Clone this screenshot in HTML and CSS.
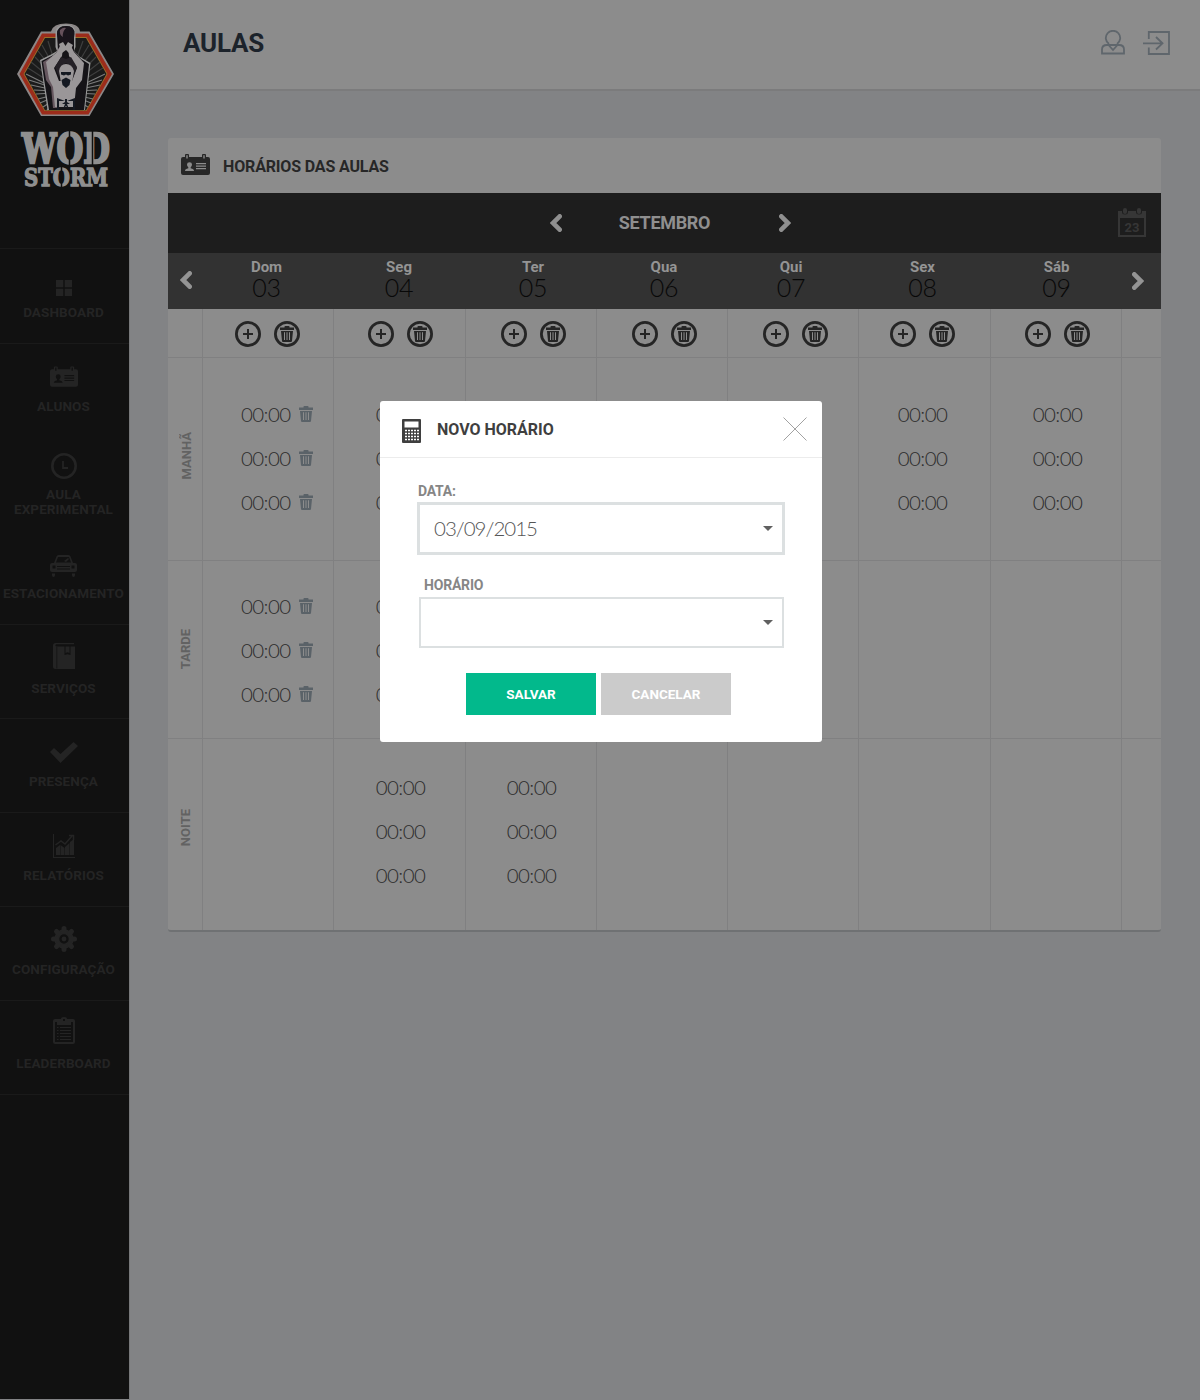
FILE: index.html
```html
<!DOCTYPE html>
<html lang="pt-BR">
<head>
<meta charset="utf-8">
<title>Aulas</title>
<link rel="stylesheet" href="styles.css">
</head>
<body>
<svg class="defs" width="0" height="0" aria-hidden="true">
  <symbol id="bin" viewBox="0 0 14 16"><path fill="currentColor" fill-rule="evenodd" d="M0 1.5h4.500V.8q0-.8.8-.8h3.400q.8 0 .8.8v.7H14V4H0zM1 5h12l-1 10q-.1 1-1 1H3q-.9 0-1-1zM4 6.300V14h1V6.300zM6.500 6.300V14h1V6.300zM9 6.300V14h1V6.300z"/></symbol>
  <symbol id="add" viewBox="0 0 26 26"><circle cx="13" cy="13" r="11.600" fill="none" stroke="currentColor" stroke-width="2.800"/><path d="M13 8v10M8 13h10" stroke="currentColor" stroke-width="2"/></symbol>
  <symbol id="del" viewBox="0 0 26 26"><circle cx="13" cy="13" r="11.600" fill="none" stroke="currentColor" stroke-width="2.800"/><use href="#bin" x="6" y="5" width="14" height="16"/></symbol>
  <symbol id="left" viewBox="0 0 12 18"><path d="M9.700 2.300L3 9l6.700 6.700" fill="none" stroke="currentColor" stroke-width="4.600" stroke-linecap="round"/></symbol>
  <symbol id="right" viewBox="0 0 12 18"><path d="M2.300 2.300L9 9l-6.700 6.700" fill="none" stroke="currentColor" stroke-width="4.600" stroke-linecap="round"/></symbol>
  <symbol id="card" viewBox="0 0 29 22"><path fill="currentColor" fill-rule="evenodd" d="M2 3h2V1q0-1 1-1h2q1 0 1 1v2h13V1q0-1 1-1h2q1 0 1 1v2h2q2 0 2 2v14q0 2-2 2H2q-2 0-2-2V5q0-2 2-2zM5.300 1.200V4.500h1.400V1.200zM22.300 1.200V4.500h1.400V1.200zM15 9v1.200h10V9zM15 11.500v1.200h10v-1.200zM15 14v1.200h10V14zM4 17h9q0-2-3.300-2.700v-1q1.300-1 1.300-2.700 0-2.400-2.500-2.400T6 10.600q0 1.700 1.300 2.700v1Q4 15 4 17z"/></symbol>
</svg>
<div class="app">
  <aside class="sidebar">
    <svg class="logo" viewBox="0 0 129 200" width="129" height="200">
      <path fill="#8c8787" d="M41 31.500h10q2-8 15-8t14 8h9.500L114 74l-24.500 42H41L17 74z"/>
      <path fill="#9c2c1b" d="M42 33.500h46.500L112 74l-23.500 40.500h-46.500L19.500 74z"/>
      <path fill="#987029" d="M44.500 37h42L107.500 74 86.500 111h-42L23.500 74z"/>
      <path fill="#1b1b1b" d="M45 38h41L106.500 74 86 110.200H45L24.500 74z"/>
      <g stroke="#3e3e3e" stroke-width="1.200"><path d="M53 84L28 68M53 80L31 62M53 76L35 57M53 70L38 51M53 65L42 45M54 60L48 41M77 84l26-16M77 80l23-18M77 76l19-19M77 70l16-19M77 65l12-20M76 60l7-19"/></g>
      <g stroke="#7c7c7c" stroke-width="1.200"><path d="M54 88L26 74M54 88L29 80M54 90L31 85M54 91L34 90M54 93L36 94M54 95L38 99M54 97L40 103M54 100L43 107M54 103l-7 7M76 88l29-14M76 88l26-8M76 90l24-5M76 91l21-1M76 93l19 1M76 95l17 4M76 97l15 6M76 100l12 7M76 103l8 7"/></g>
      <path fill="#999" d="M57 51l-1.500-4V33q0-8.500 10-8.500T75.500 33v14L74 51l6 6 10.500 6-1.500 12-4 35H47.500L43 80l-3-20 12-6z"/>
      <path fill="#151317" d="M58 51l-1-17q0-8 9-8t8 8v17l7 8 8 5-1 10-4 36H49L44 79l-2.500-18 12-6z"/>
      <path fill="#66575f" d="M43 62l13-8 2-5 3-3v10l-8 12 4 14 1 26h-5l-2-21-5-7z"/>
      <path fill="#9a9698" d="M46 62l11-10 3-6 3 1-1 9-8 12 5 13h13l5-13-8-12-1-9 3-1 3 6 10 11-2 17-6 8-2 19H55l-2-20-4-8z"/>
      <path fill="#19141b" d="M57.500 34q0-8 8.500-8t8.500 8q0 6-5.500 8.500h-6q-5.500-2.500-5.500-8.500z"/>
      <path fill="#66515b" d="M60 30q3-3 6-2-4 4-3 9-4-2-3-7z"/>
      <path fill="#9a9798" d="M59 44l4-2 2.500 4 2.500-4 5 3-4 8-3-3-4 3z"/>
      <path fill="#252127" d="M55 67l6-10 5 2 5-2 6 10-4 10-1-10-6-4-6 4-1 10z"/>
      <path fill="#9a9698" d="M59 71q1-7 7-7t8 7l-2 12H61z"/>
      <path fill="#151922" d="M61 72h10v2.500l-3 1-2-1-2 1-3-1zM61.500 80l4.500-2.500 4.500 2.500-1 5-3.500 3-3.500-3zM57 98l8 3-6 0v9h-2zM75 98l-8 3 6 0v9h2zM65 99h2v3l3 2-3 0 2 5-3-3-3 3 2-5-3 0 3-2z"/>
      <g class="brand" fill="#8f8f8f" stroke="#8f8f8f">
        <text x="22" y="162.500" font-size="41" stroke-width="2.400" textLength="88" lengthAdjust="spacingAndGlyphs">WOD</text>
        <text x="24" y="185.500" font-size="24.500" stroke-width="1.400" textLength="84" lengthAdjust="spacingAndGlyphs">STORM</text>
      </g>
      <path stroke="#111" stroke-width="1.500" d="M69.500 130v8.500M69.500 156v9M92.500 130v35.500M61.500 166.500v5M61.500 182v5.500"/>
    </svg>
    <nav class="menu">
      <a class="item dash"><svg width="16" height="16" viewBox="0 0 16 16"><path fill="currentColor" d="M0 0h7.300v7.300H0zM8.700 0H16v7.300H8.700zM0 8.700h7.300V16H0zM8.700 8.700H16V16H8.700z"/></svg><span>DASHBOARD</span></a>
      <a class="item students"><svg width="28" height="22"><use href="#card"/></svg><span>ALUNOS</span></a>
      <a class="item trial"><svg width="26" height="26" viewBox="0 0 26 26"><g fill="none" stroke="currentColor"><circle cx="13" cy="13" r="11.700" stroke-width="2.600"/><path d="M12 8v7h5" stroke-width="1.800"/></g></svg><span>AULA<br>EXPERIMENTAL</span></a>
      <a class="item parking"><svg width="27" height="22" viewBox="0 0 27 22"><path fill="currentColor" fill-rule="evenodd" d="M4 8L6.500 1.500Q7 0 8.500 0h10q1.500 0 2 1.500L23 8h2q2 0 2 2v5q0 2-2 2H2q-2 0-2-2v-5q0-2 2-2zM6 7.500h15L19 2H8zM2.500 10.500v3h3v-3zM21.500 10.500v3h3v-3zM7 11v1h13v-1zM7 13.500v1h13v-1zM2 18.500h3V20q0 2-1.500 2T2 20zM22 18.500h3V20q0 2-1.500 2T22 20zM14 6l4-3 1 1-3 3z"/></svg><span>ESTACIONAMENTO</span></a>
      <a class="item services"><svg width="22" height="26" viewBox="0 0 22 26"><path fill="currentColor" fill-rule="evenodd" d="M2.500 0H21v1.200H3q-1.300 1.500 0 2.300h8.500V12l3-.800 3 .800V3.500H22V26H2.500Q0 26 0 23.500v-21Q0 0 2.500 0zM3.500 4v21.500h.700V4zM12.500 3.500h4V10l-2-.800-2 .800z"/></svg><span>SERVIÇOS</span></a>
      <a class="item presence"><svg width="28" height="21" viewBox="0 0 28 21"><path fill="currentColor" d="M0 10l4-4 6.500 6L23.500 0 28 4 10.500 21z"/></svg><span>PRESENÇA</span></a>
      <a class="item reports"><svg width="22" height="24" viewBox="0 0 22 24"><path fill="currentColor" d="M0 0h1v23h21v1H0zM3 14l4-3v10H3zM7.500 11l4 3v7h-4zM12 13l4.500-4v12H12zM17 8l4-3v16h-4z"/><path d="M2.500 11L8 7l4 3 7-8M16 1.500h4.500V6" fill="none" stroke="currentColor" stroke-width="1.500"/></svg><span>RELATÓRIOS</span></a>
      <a class="item config"><svg width="26" height="26" viewBox="0 0 26 26"><circle cx="13" cy="13" r="7.200" fill="none" stroke="currentColor" stroke-width="5"/><circle cx="13" cy="13" r="2.400" fill="currentColor"/><path d="M13 2.500v3M13 20.500v3M2.500 13h3M20.500 13h3M5.500 5.500l2 2M18.500 18.500l2 2M5.500 20.500l2-2M18.500 7.500l2-2" stroke="currentColor" stroke-width="5" stroke-linecap="round"/></svg><span>CONFIGURAÇÃO</span></a>
      <a class="item leader"><svg width="22" height="27" viewBox="0 0 22 27"><path fill="currentColor" fill-rule="evenodd" d="M2 2h6q0-2 3-2t3 2h6q2 0 2 2v21q0 2-2 2H2q-2 0-2-2V4q0-2 2-2zM2 5v20h18V5h-2v3H4V5zM10 2v2h2V2z"/><path d="M4 10.500h1.500M7 10.500h11M4 13.500h1.500M7 13.500h11M4 16.500h1.500M7 16.500h11M4 19.500h1.500M7 19.500h11M4 22.500h1.500M7 22.500h11" stroke="currentColor"/></svg><span>LEADERBOARD</span></a>
    </nav>
  </aside>
  <div class="content">
    <header class="topbar">
      <h1>AULAS</h1>
      <div class="tools">
        <svg width="24" height="25" viewBox="0 0 24 25"><path d="M8 14A7.200 7.200 0 1 1 16 14M1 23.500V19.500q0-4.500 5-4.500H18q5 0 5 4.500v4zM7.500 15l4.500 5 4.500-5" fill="none" stroke="currentColor" stroke-width="1.800"/></svg>
        <svg width="27" height="24" viewBox="0 0 27 24"><path d="M5.800 8V1H26v22H5.800v-6.500M0 12.300h19M13 6l6.500 6.300L13 18.500" fill="none" stroke="currentColor" stroke-width="1.800"/></svg>
      </div>
    </header>
    <main class="panel">
      <div class="panel-title"><svg width="29" height="22"><use href="#card"/></svg><h2>HORÁRIOS DAS AULAS</h2></div>
      <div class="month">
        <svg width="12" height="18"><use href="#left"/></svg><span>SETEMBRO</span><svg width="12" height="18"><use href="#right"/></svg>
        <div class="calendar"><svg width="28" height="30" viewBox="0 0 28 30"><path fill="currentColor" fill-rule="evenodd" d="M0 3h4v1q0 2.500 3 2.500T10 4V3h8v1q0 2.500 3 2.500T24 4V3h4v26H0zM2 10v17h24V10z"/><rect x="5" width="4" height="6" rx="2" fill="currentColor"/><rect x="19" width="4" height="6" rx="2" fill="currentColor"/><text x="14" y="23.500" text-anchor="middle" font-size="13" font-weight="700" fill="currentColor">23</text></svg></div>
      </div>
      <div class="row days">
        <div class="nav"><svg width="12" height="18"><use href="#left"/></svg></div>
        <div class="c1"><b>Dom</b><span>03</span></div><div class="c2"><b>Seg</b><span>04</span></div><div class="c3"><b>Ter</b><span>05</span></div><div class="c4"><b>Qua</b><span>06</span></div><div class="c5"><b>Qui</b><span>07</span></div><div class="c6"><b>Sex</b><span>08</span></div><div class="c7"><b>Sáb</b><span>09</span></div>
        <div class="nav next"><svg width="12" height="18"><use href="#right"/></svg></div>
      </div>
      <div class="row actions">
        <div></div>
        <div class="c1"><svg><use href="#add"/></svg><svg><use href="#del"/></svg></div>
        <div class="c2"><svg><use href="#add"/></svg><svg><use href="#del"/></svg></div>
        <div class="c3"><svg><use href="#add"/></svg><svg><use href="#del"/></svg></div>
        <div class="c4"><svg><use href="#add"/></svg><svg><use href="#del"/></svg></div>
        <div class="c5"><svg><use href="#add"/></svg><svg><use href="#del"/></svg></div>
        <div class="c6"><svg><use href="#add"/></svg><svg><use href="#del"/></svg></div>
        <div class="c7"><svg><use href="#add"/></svg><svg><use href="#del"/></svg></div>
        <div></div>
      </div>
      <div class="row slots morning">
        <div class="period"><span>MANHÃ</span></div>
        <div class="own"><p>00:00<svg><use href="#bin"/></svg></p><p>00:00<svg><use href="#bin"/></svg></p><p>00:00<svg><use href="#bin"/></svg></p></div>
        <div class="c2"><p>00:00</p><p>00:00</p><p>00:00</p></div>
        <div></div><div></div><div></div>
        <div class="c6"><p>00:00</p><p>00:00</p><p>00:00</p></div>
        <div class="c7"><p>00:00</p><p>00:00</p><p>00:00</p></div>
        <div></div>
      </div>
      <div class="row slots afternoon">
        <div class="period"><span>TARDE</span></div>
        <div class="own"><p>00:00<svg><use href="#bin"/></svg></p><p>00:00<svg><use href="#bin"/></svg></p><p>00:00<svg><use href="#bin"/></svg></p></div>
        <div class="c2"><p>00:00</p><p>00:00</p><p>00:00</p></div>
        <div></div><div></div><div></div><div></div><div></div><div></div>
      </div>
      <div class="row slots night">
        <div class="period"><span>NOITE</span></div>
        <div></div>
        <div class="c2"><p>00:00</p><p>00:00</p><p>00:00</p></div>
        <div class="c3"><p>00:00</p><p>00:00</p><p>00:00</p></div>
        <div></div><div></div><div></div><div></div><div></div>
      </div>
    </main>
  </div>
</div>
<section class="modal" role="dialog">
  <div class="modal-head">
    <svg width="19" height="24" viewBox="0 0 19 24"><path fill="#3f3f3f" fill-rule="evenodd" d="M1 0h17q1 0 1 1v22q0 1-1 1H1q-1 0-1-1V1q0-1 1-1zM2.500 2.500v6h14v-6z"/><path d="M3 11.500h14M3 14.500h14M3 17.500h14M3 20.500h14" stroke="#fff" stroke-width="1.700" stroke-dasharray="2 1"/></svg>
    <h2>NOVO HORÁRIO</h2>
    <svg class="close" width="24" height="24" viewBox="0 0 24 24"><path d="M.500.500l23 23M23.500.500l-23 23" stroke="#a2a2a2"/></svg>
  </div>
  <div class="modal-body">
    <label class="l-date">DATA:</label>
    <div class="select date"><span>03/09/2015</span><i></i></div>
    <label class="l-time">HORÁRIO</label>
    <div class="select time"><span></span><i></i></div>
    <div class="buttons"><button class="save">SALVAR</button><button class="cancel">CANCELAR</button></div>
  </div>
</section>
</body>
</html>
```

FILE: styles.css
```css
* { box-sizing: border-box; }
body { margin: 0; background: #828385; font-family: Roboto, sans-serif; }
h1, h2, p { margin: 0; }
svg { display: block; flex: none; }
.defs { position: absolute; }
.app { display: flex; height: 1400px; }

.sidebar { width: 129px; height: 1399px; background: #111; flex: none; color: #242424; }
.brand { font-family: "DejaVu Serif", serif; font-weight: 700; }
.menu { margin-top: 48px; border-top: 1px solid #1a1a1a; }
.item { display: flex; flex-direction: column; align-items: center; height: 94px; padding-right: 2px; border-bottom: 1px solid #1a1a1a; font-size: 13.5px; line-height: 16px; font-weight: 700; letter-spacing: .1px; text-align: center; white-space: nowrap; }
.item span { margin-top: 9px; }
.dash { height: 95px; padding-top: 31px; }
.dash span { margin-top: 8px; }
.students { padding-top: 22px; border-bottom-color: transparent; height: 94px; }
.students span { margin-top: 10px; }
.trial { padding-top: 15px; border-bottom-color: transparent; height: 100px; }
.trial span { margin-top: 8px; line-height: 15px; }
.parking { padding-top: 17px; height: 87px; }
.parking span { margin-top: 8px; }
.services { padding-top: 18px; }
.services span { margin-top: 11px; }
.presence { padding-top: 23px; }
.presence span { margin-top: 10px; }
.reports { padding-top: 21px; }
.reports span { margin-top: 9px; }
.config { padding-top: 19px; }
.config span { margin-top: 9px; }
.leader { padding-top: 16px; }
.leader span { margin-top: 11px; }

.content { flex: 1; border-left: 1px solid #77787a; }
.topbar { display: flex; justify-content: space-between; align-items: center; height: 91px; padding: 0 30px 4px 53px; background: #8c8c8c; border-bottom: 2px solid #7b7b7c; }
h1 { font-size: 26px; line-height: 30px; color: #1c232b; letter-spacing: -.2px; padding-top: 1px; }
.tools { display: flex; align-items: center; gap: 18px; color: #5f666c; }

.panel { width: 993px; margin: 47px 0 0 38px; background: #8c8c8c; border-radius: 3px; border-bottom: 2px solid #6f7173; }
.panel-title { display: flex; align-items: center; gap: 13px; height: 55px; padding: 0 0 2px 13px; color: #272727; }
h2 { font-size: 16px; line-height: 20px; letter-spacing: 0; }
.panel-title h2 { padding-top: 4px; letter-spacing: -.15px; }
.month { display: grid; grid-template-columns: 12px 217px 12px 1fr; align-items: center; height: 60px; padding: 0 15px 0 382px; background: #1d1d1d; color: #8f8f8f; font-size: 18px; font-weight: 700; text-align: center; letter-spacing: -.3px; }
.month span { padding: 0 12px 2px 0; }
.calendar { justify-self: end; color: #363636; letter-spacing: 0; }
.row { display: grid; grid-template-columns: 35px 131px 132px 131px 131px 131px 132px 131px 39px; }
.c1 { --shift: -1px; } .c2 { --shift: 2px; } .c3 { --shift: 4px; } .c4 { --shift: 4px; } .c5 { --shift: 0px; } .c6 { --shift: -4px; } .c7 { --shift: 3px; }
.days { height: 56px; background: #323232; color: #949494; }
.days > div { display: flex; flex-direction: column; align-items: center; padding-top: 5px; padding-left: max(0px, var(--shift)); padding-right: calc(1px + max(0px, 0px - var(--shift))); }
.days .c1 { --shift: -3px; } .days .c2 { --shift: -1px; } .days .c5 { --shift: -4px; } .days .c7 { --shift: 1px; }
.days b { font-size: 15px; line-height: 18px; }
.days span { font: 300 25px/23px Lato, sans-serif; letter-spacing: -.3px; color: #080808; }
.days .nav { padding: 18px 0 0; }
.days .next { padding: 19px 7px 0 0; }
.actions { height: 49px; }
.actions > div, .slots > div { border-right: 1px solid #808081; border-bottom: 1px solid #808081; }
.row > div:last-child { border-right: 0; }
.actions > div { display: flex; justify-content: center; align-items: center; gap: 13px; padding-top: 2px; padding-left: max(0px, var(--shift)); padding-right: max(0px, 0px - var(--shift)); }
.actions .c5 { --shift: 5px; }
.actions svg { width: 26px; height: 26px; color: #252525; }
.slots p { display: flex; justify-content: center; align-items: center; gap: 9px; height: 44px; padding-bottom: 2px; font: 300 20.5px/42px Lato, sans-serif; letter-spacing: -.6px; color: #2c2c2c; }
.slots > div { padding-left: max(0px, var(--shift)); padding-right: max(0px, 0px - var(--shift)); }
.slots .own p { justify-content: flex-start; padding-left: 38px; }
.slots p svg { width: 14px; height: 16px; color: #5a6268; }
.slots .c3 { --shift: 1px; }
.morning { height: 203px; } .morning > div { padding-top: 35px; }
.afternoon { height: 178px; } .afternoon > div { padding-top: 24px; }
.night { height: 191px; } .night > div { padding-top: 27px; border-bottom: 0; }
.slots .period { display: flex; align-items: center; justify-content: center; padding: 0 0 0 1px; font-size: 13px; line-height: 16px; font-weight: 700; color: #626262; }
.period span { writing-mode: vertical-rl; transform: rotate(180deg); }
.morning .period { padding: 0 0 7px 3px; }
.night .period { padding-bottom: 13px; }

.modal { position: absolute; left: 380px; top: 401px; width: 442px; height: 341px; background: #fff; border-radius: 3px; }
.modal-head { display: flex; align-items: center; height: 57px; padding: 4px 15px 0 22px; border-bottom: 1px solid #ececec; color: #3f3f3f; }
.modal-head h2 { flex: 1; padding: 0 0 2px 16px; }
.close { margin-bottom: 4px; }
.modal-body { display: flex; flex-direction: column; padding: 25px 37px 0; }
label { font-size: 14px; line-height: 17px; font-weight: 700; letter-spacing: -.2px; color: #868686; }
.l-date { margin-left: 1px; }
.select { display: flex; align-items: center; justify-content: space-between; }
.date { height: 53px; margin-top: 2px; padding: 0 9px 0 14px; border: 3px solid #dce0e1; }
.select span { padding-bottom: 2px; font: 300 20.5px/30px Lato, sans-serif; letter-spacing: -1px; color: #555; }
.select i { border: 5px solid transparent; border-top-color: #606060; border-bottom: 0; }
.l-time { margin: 21px 0 0 7px; padding-top: 1px; height: 17px; }
.time { height: 51px; margin: 4px 1px 0 2px; padding: 0 9px; border: 2px solid #dce0e1; }
.buttons { display: flex; gap: 5px; margin: 25px 0 0 49px; }
button { width: 130px; height: 42px; padding: 0; border: 0; color: #fff; font: 700 13.5px Roboto, sans-serif; letter-spacing: 0; }
.save { background: #02b98c; }
.cancel { background: #cbcbcb; }
```
